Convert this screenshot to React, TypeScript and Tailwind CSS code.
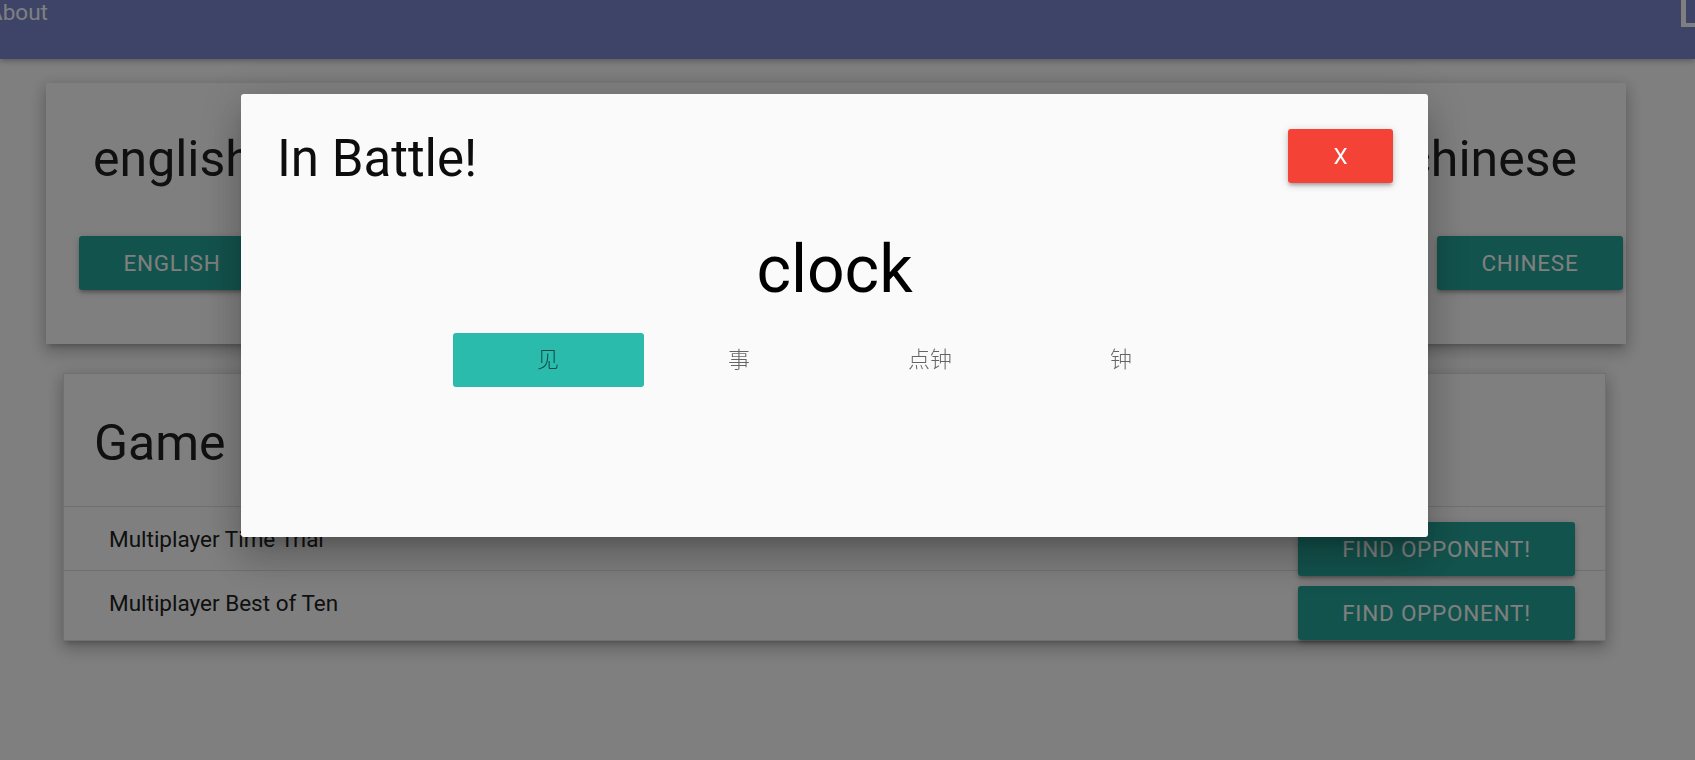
import React from "react";

const font = { fontFamily: 'Roboto, "Noto Sans CJK SC", sans-serif' };

const answers = [
  { id: 1, text: "见", picked: true },
  { id: 2, text: "事", picked: false },
  { id: 3, text: "点钟", picked: false },
  { id: 4, text: "钟", picked: false },
];

const modes = [
  { id: 1, name: "Multiplayer Time Trial", rowClass: "h-[64px] border-b border-[#e0e0e0]" },
  { id: 2, name: "Multiplayer Best of Ten", rowClass: "h-[69px]" },
];

const cardShadow =
  "shadow-[0_8px_17px_2px_rgba(0,0,0,0.14),0_3px_14px_2px_rgba(0,0,0,0.12),0_5px_5px_-3px_rgba(0,0,0,0.2)]";
const btnShadow =
  "shadow-[0_3px_3px_0_rgba(0,0,0,0.14),0_4px_2px_-3px_rgba(0,0,0,0.12),0_2px_8px_0_rgba(0,0,0,0.2)]";

const TealButton = ({ label, width }: { label: string; width: string }) => (
  <button
    className={`relative ${width} h-[54px] rounded-[3px] bg-[#26a69a] text-white uppercase text-[22.5px] leading-[54px] tracking-[0.75px] text-center ${btnShadow}`}
  >
    {label}
  </button>
);

const App = () => {
  return (
    <div className="relative min-h-screen bg-white overflow-hidden" style={font}>
      <header className="h-[59px] bg-[#7a88d0] flex justify-between items-start shadow-[0_2px_6px_rgba(0,0,0,0.3)]">
        <a className="ml-[-12px] text-white text-[22.5px] leading-[24px]">About</a>
        <div className="w-[14px] h-[27px] border-l-[5px] border-b-[4px] border-white"></div>
      </header>

      <div className={`ml-[46px] mt-[24px] w-[1580px] bg-white pt-[46px] pb-[54px] ${cardShadow}`}>
        <div className="flex justify-between pl-[47px] pr-[49px] text-[50px] leading-[60px] text-[#212121]">
          <span>english</span>
          <span>chinese</span>
        </div>
        <div className="mt-[47px] flex justify-between pl-[33px] pr-[3px]">
          <TealButton label="English" width="w-[186px]" />
          <TealButton label="Chinese" width="w-[186px]" />
        </div>
      </div>

      <div className={`ml-[63px] mt-[29px] w-[1543px] bg-white border border-[#e0e0e0] ${cardShadow}`}>
        <div className="pt-[39px] pb-[33px] pl-[30px] border-b border-[#e0e0e0] text-[50px] leading-[60px] text-[#212121]">
          Game Modes
        </div>
        {modes.map((mode) => (
          <div key={mode.id} className={`flex justify-between items-start pt-[15px] pl-[45px] pr-[30px] ${mode.rowClass}`}>
            <span className="text-[22.5px] leading-[34px] text-[#212121]">{mode.name}</span>
            <TealButton label="Find Opponent!" width="w-[277px]" />
          </div>
        ))}
      </div>

      <div className="fixed inset-0 bg-black/50"></div>

      <div className="fixed left-[241px] top-[94px] w-[1187px] h-[443px] rounded-[3px] bg-[#fafafa] shadow-[0_24px_38px_3px_rgba(0,0,0,0.14),0_9px_46px_8px_rgba(0,0,0,0.12),0_11px_15px_-7px_rgba(0,0,0,0.2)]">
        <div className="flex justify-between items-start pt-[35px] pl-[36px] pr-[35px]">
          <h4 className="text-[51px] leading-[60px] text-[#0d0d0d]">In Battle!</h4>
          <button className={`w-[105px] h-[54px] rounded-[3px] bg-[#f44336] text-white text-[22.5px] leading-[54px] ${btnShadow}`}>
            X
          </button>
        </div>
        <div className="mt-[43px] text-center text-[66px] leading-[76px] text-black">clock</div>
        <div className="mt-[25px] flex justify-center">
          {answers.map((a) => (
            <button
              key={a.id}
              className={`w-[191px] h-[54px] rounded-[3px] text-[22px] leading-[54px] font-light text-black/60 ${a.picked ? "bg-[#2bbbad]" : "bg-transparent"}`}
            >
              {a.text}
            </button>
          ))}
        </div>
      </div>
    </div>
  );
};

export default App;
